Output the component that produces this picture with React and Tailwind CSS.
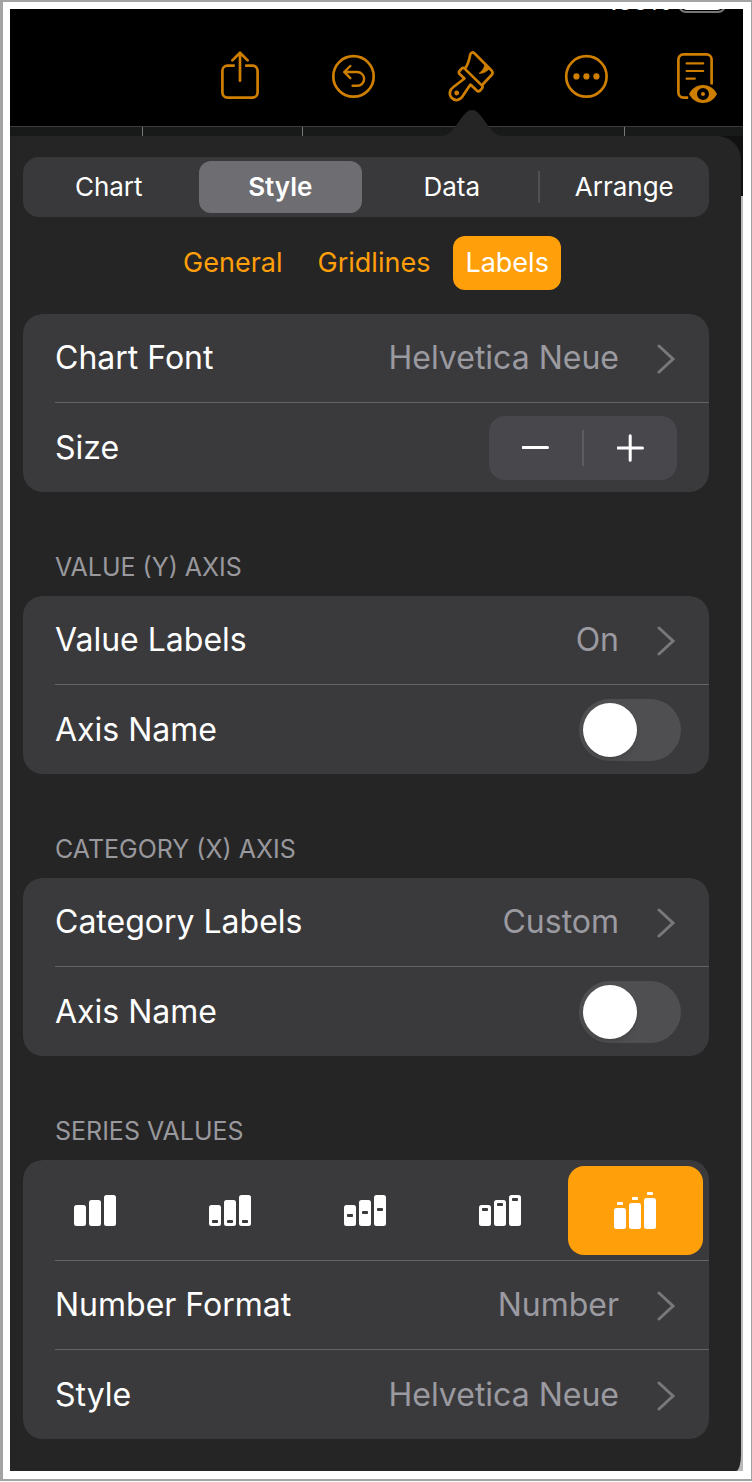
const BrushIcon = () => (
  <>
    <path d="M20.5 30.5 L15.6 26 Q14.2 24.4 15.6 22.8 L17.6 20.6 Q19 19.2 20.6 20.6 L38 37.6 Q39.2 38.9 38 40.4 L36 42.6 Q34.4 43.9 32.8 42.6 L26.4 36.6 L19.4 47 C16.4 52.8 11 53.4 7.6 49.8 C4.6 46.4 5.6 41.6 9.4 39 Z" />
    <path d="M21.5 19.6 C24.6 16 25 11.6 26.4 6.2 Q27.8 3.2 30.4 5.2 L47.8 22.8 Q49.4 24.8 47.8 26.8 L38.2 37" />
    <path d="M40.8 15.6 C40.6 20 38.6 22.6 35 25.4 C39.4 25.4 42.6 24 45.6 20.4 Z" fill="currentColor" strokeWidth="0.6" />
    <circle cx="12.7" cy="45" r="2.4" fill="currentColor" stroke="none" />
  </>
);

const tools = [
  {
    label: "Share",
    icon: (
      <path d="M21.7 17.7H15.4a5 5 0 0 0-5 5V44.6a5 5 0 0 0 5 5H40.6a5 5 0 0 0 5-5V22.7a5 5 0 0 0-5-5H34.2M28 5V32.7M20.4 12.4 28 4.8l7.6 7.6" />
    ),
  },
  {
    label: "Undo",
    icon: (
      <>
        <circle cx="25.5" cy="28.4" r="20.2" />
        <path d="M22.3 18 16.2 24l6.1 6.2M16.2 24H29.2a6.9 6.9 0 0 1 0 13.8H24.6" strokeWidth="2.4" />
      </>
    ),
  },
  { label: "Format", icon: <BrushIcon /> },
  {
    label: "More",
    icon: (
      <>
        <circle cx="26.4" cy="28.4" r="20.2" />
        <g fill="currentColor" stroke="none">
          <circle cx="16.4" cy="28.4" r="3.1" />
          <circle cx="26.4" cy="28.4" r="3.1" />
          <circle cx="36.4" cy="28.4" r="3.1" />
        </g>
      </>
    ),
  },
  {
    label: "Reading view",
    icon: (
      <>
        <path d="M12.2 49.6H7.4a5 5 0 0 1-5-5V11.4a5 5 0 0 1 5-5H30.6a5 5 0 0 1 5 5V36.6" strokeLinecap="butt" />
        <path d="M10.6 15.4H27.2M10.6 23H27.2M10.6 30.7H18.8" strokeWidth="2.2" />
        <path d="M13 46C19 34 35 34 41 46C35 58 19 58 13 46Z" fill="currentColor" stroke="none" />
        <circle cx="27" cy="46" r="4" stroke="black" strokeWidth="4" fill="currentColor" />
      </>
    ),
  },
];

const Toolbar = () => (
  <header className="relative h-[117px] overflow-hidden bg-black">
    <div className="absolute -top-[21px] right-[17px] flex items-end gap-[6px]">
      <span className="text-[24px] leading-[22px] font-medium text-white">100%</span>
      <span className="h-[25px] w-12 rounded-lg border-2 border-[#777777] p-px">
        <span className="block h-full rounded-md bg-white" />
      </span>
    </div>
    <nav className="flex justify-end gap-16 pt-[39px] pr-[15px]">
      {tools.map((tool) => (
        <button key={tool.label} type="button" aria-label={tool.label} className="text-[#cf7f00]">
          <svg
            viewBox="0 0 52 56"
            className="h-14 w-[52px]"
            fill="none"
            stroke="currentColor"
            strokeWidth="2.7"
            strokeLinecap="round"
            strokeLinejoin="round"
          >
            {tool.icon}
          </svg>
        </button>
      ))}
    </nav>
  </header>
);

const Ruler = () => (
  <div className="flex h-[10px] border-t border-[#3c3c3c] bg-[#181919]">
    <span className="w-[133px] border-r border-[#777777]" />
    <span className="w-40 border-r border-[#777777]" />
    <span className="w-[161px] border-r border-[#777777]" />
    <span className="w-[161px] border-r border-[#777777]" />
  </div>
);

const SegmentedControl = () => (
  <div className="grid h-[60px] grid-cols-4 rounded-2xl bg-[#39393b] text-[26px] leading-8 text-white">
    <button type="button" className="m-1">Chart</button>
    <button type="button" className="m-1 rounded-xl bg-[#6e6d72] font-semibold">Style</button>
    <button type="button" className="m-1">Data</button>
    <div className="flex items-center">
      <span className="h-8 w-[2px] bg-[#505053]" />
      <button type="button" className="grow">Arrange</button>
    </div>
  </div>
);

const Tabs = () => (
  <div className="mt-[19px] mb-6 flex h-[54px] justify-center gap-[11px] text-[27px] leading-8 text-[#ff9f0a]">
    <button type="button" className="px-3">General</button>
    <button type="button" className="px-3">Gridlines</button>
    <button type="button" className="rounded-xl bg-[#ff9f0a] px-3 text-white">Labels</button>
  </div>
);

const Card = ({ title, children }) => (
  <section>
    {title ? <h2 className="pt-[59px] pb-[13px] pl-8 text-[25px] leading-8 text-[#98989d]">{title}</h2> : null}
    <div className="rounded-[20px] bg-[#3a3a3c]">{children}</div>
  </section>
);

const Divider = () => <hr className="ml-8 border-t border-[#646466]" />;

const LinkRow = ({ label, value }) => (
  <button type="button" className="flex h-[88px] w-full items-center pr-8 pl-8 text-[32px] leading-10 last:h-[89px]">
    <span className="text-white">{label}</span>
    <span className="ml-auto text-[#9b9aa1]">{value}</span>
    <svg viewBox="0 0 20 32" className="mt-[2px] ml-[38px] h-8 w-5" fill="none" stroke="#78787b" strokeWidth="3" strokeLinecap="round">
      <path d="M2 3 16 16 2 29" />
    </svg>
  </button>
);

const ToggleRow = ({ id, label }) => (
  <div className="flex h-[89px] items-center justify-between pr-7 pl-8 text-[32px] leading-10 text-white">
    <label htmlFor={id}>{label}</label>
    <input
      id={id}
      type="checkbox"
      role="switch"
      className="h-[62px] w-[102px] appearance-none rounded-full bg-[#4f4f51] p-1 before:block before:size-[54px] before:rounded-full before:bg-white before:shadow-md checked:bg-[#ff9f0a] checked:before:ml-10"
    />
  </div>
);

const StepperRow = ({ label }) => (
  <div className="flex h-[89px] items-center justify-between pr-8 pl-8 text-[32px] leading-10 text-white">
    <span>{label}</span>
    <div className="flex h-16 w-[188px] items-center rounded-2xl bg-[#48474c]">
      <button type="button" aria-label="Decrease size" className="flex h-full flex-1 items-center justify-center">
        <svg viewBox="0 0 28 28" className="size-7" stroke="white" strokeWidth="3" strokeLinecap="round">
          <path d="M1 13.5H25.5" />
        </svg>
      </button>
      <span className="h-9 w-[2px] bg-[#5d5c61]" />
      <button type="button" aria-label="Increase size" className="flex h-full flex-1 items-center justify-center">
        <svg viewBox="0 0 28 28" className="size-7" stroke="white" strokeWidth="3" strokeLinecap="round">
          <path d="M1 14H25.5M13.2 1.7V26.3" />
        </svg>
      </button>
    </div>
  </div>
);

// marks are the y positions of the value tag on each bar
const positions = [
  { label: "Off", marks: [] },
  { label: "Bottom", marks: [25, 25, 25] },
  { label: "Middle", marks: [19, 16, 13] },
  { label: "Top", marks: [13, 8, 3] },
  { label: "Outside", marks: [10, 5, 0], outside: true },
];

const BarsIcon = ({ marks, outside }) => {
  const shift = outside ? 6 : 0;
  const height = 31 + shift;
  return (
    <svg viewBox={`0 0 42 ${height}`} width="42" height={height}>
      {[10, 5, 0].map((y, i) => (
        <rect key={y} x={i * 15} y={y + shift} width="12" height={31 - y} rx="2.5" fill="white" />
      ))}
      {marks.map((y, i) => (
        <rect key={i} x={i * 15 + 3} y={y} width="6" height="3" rx="0.8" fill={outside ? "white" : "#3a3a3c"} />
      ))}
    </svg>
  );
};

const PositionPicker = () => (
  <div role="radiogroup" aria-label="Value position" className="grid h-[100px] grid-cols-5 pt-[6px] pr-[6px] pb-[5px] pl-1">
    {positions.map((position) => (
      <label
        key={position.label}
        className="relative flex items-center justify-center rounded-2xl has-checked:bg-[#ff9f0a]"
      >
        <input
          type="radio"
          name="value-position"
          aria-label={position.label}
          defaultChecked={position.label === "Outside"}
          className="sr-only"
        />
        <BarsIcon marks={position.marks} outside={position.outside} />
      </label>
    ))}
  </div>
);

const App = () => (
  <div className="border-t-2 border-r border-b-2 border-l-3 border-[#a3a3a3] bg-white pt-[7px] pr-2 pb-2 pl-[7px] font-['Inter',sans-serif]">
    <Toolbar />
    <Ruler />
    <div className="bg-[linear-gradient(#111111_60px,#b9b9b9_60px)] pr-[2px]">
      <main className="relative rounded-tr-3xl rounded-br-[5px_16px] bg-[#252525] pt-[21px] pr-8 pb-8 pl-[13px]">
        <svg viewBox="0 0 64 27" className="absolute -top-[26px] right-[237px] h-[27px] w-16" fill="#252525">
          <path d="M0 27V26C10 26 14 18 20 10C25 3 28 0 32 0C36 0 39 3 44 10C50 18 54 26 64 26V27Z" />
        </svg>
        <SegmentedControl />
        <Tabs />
        <Card>
          <LinkRow label="Chart Font" value="Helvetica Neue" />
          <Divider />
          <StepperRow label="Size" />
        </Card>
        <Card title="VALUE (Y) AXIS">
          <LinkRow label="Value Labels" value="On" />
          <Divider />
          <ToggleRow id="value-axis-name" label="Axis Name" />
        </Card>
        <Card title="CATEGORY (X) AXIS">
          <LinkRow label="Category Labels" value="Custom" />
          <Divider />
          <ToggleRow id="category-axis-name" label="Axis Name" />
        </Card>
        <Card title="SERIES VALUES">
          <PositionPicker />
          <Divider />
          <LinkRow label="Number Format" value="Number" />
          <Divider />
          <LinkRow label="Style" value="Helvetica Neue" />
        </Card>
      </main>
    </div>
  </div>
);

export default App;
